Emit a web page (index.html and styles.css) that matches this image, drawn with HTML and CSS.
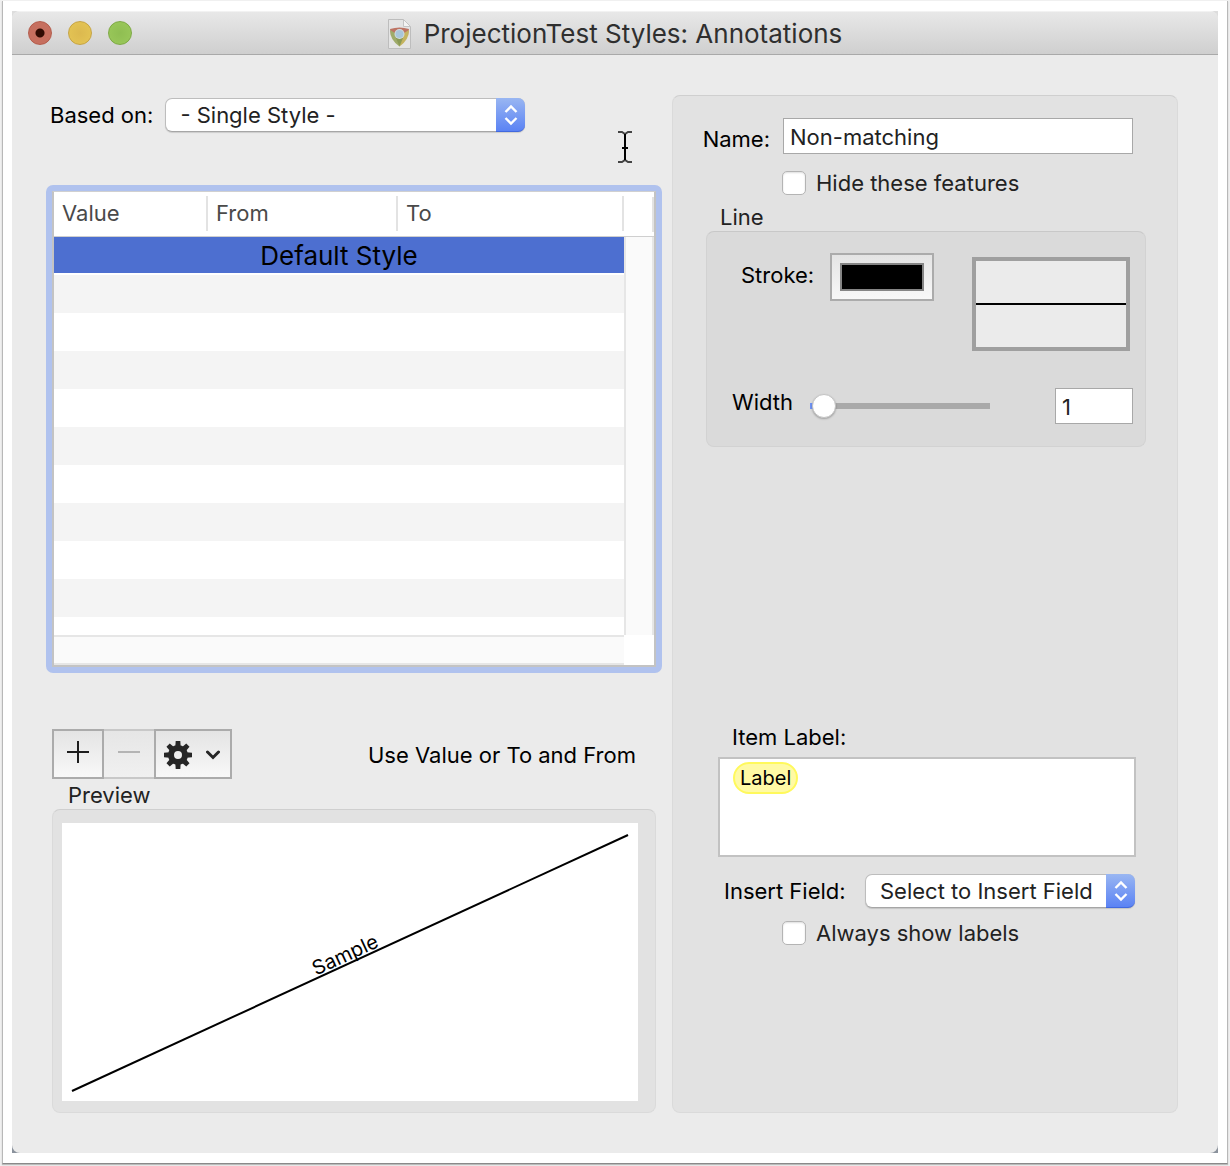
FILE: index.html
```html
<!DOCTYPE html>
<html lang="en">
<head>
<meta charset="utf-8">
<title>ProjectionTest Styles: Annotations</title>
<link rel="stylesheet" href="styles.css">
</head>
<body>
<div class="frame">
<div class="backdrop">
<main class="window">
  <header class="titlebar">
    <div class="lights">
      <button class="light light-close" aria-label="Close"></button>
      <button class="light light-min" aria-label="Minimize"></button>
      <button class="light light-zoom" aria-label="Zoom"></button>
    </div>
    <h1 class="title">
      <svg class="doc-icon" width="24" height="30" viewBox="0 0 24 30" aria-hidden="true">
        <path d="M.500 .500H15.500L22.500 7.500V29.500H.500Z" fill="#e4e4e4" stroke="#bdbdbd"/>
        <path d="M15.500 .500V7.500H22.500Z" fill="#f3f3f3" stroke="#c4c4c4"/>
        <path d="M2 10Q11.500 7 21 10L20 16H3Z" fill="#bd7464"/>
        <path d="M2 11Q2 21 11.500 27.500V18L7 14Z" fill="#9fab6a"/>
        <path d="M21 11Q21 21 11.500 27.500L9.500 20L16 14Z" fill="#c5b45f"/>
        <path d="M8 19L11.500 27.500L15 19Z" fill="#8a9a56"/>
        <circle cx="11.500" cy="15" r="5" fill="#d3dcde"/>
        <circle cx="11.500" cy="15" r="4" fill="#a9c6da"/>
      </svg>
      <span>ProjectionTest Styles: Annotations</span>
    </h1>
  </header>

  <div class="content">
    <section class="left">
      <div class="row based-row">
        <label for="based">Based on:</label>
        <div class="popup popup-based">
          <select id="based"><option>- Single Style -</option></select>
          <span class="cap"><svg width="14" height="22" viewBox="0 0 14 22"><path d="M1.500 8L7 2.500L12.500 8M1.500 14L7 19.500L12.500 14" fill="none" stroke="#fff" stroke-width="2.400"/></svg></span>
        </div>
      </div>

      <div class="focus-ring">
        <table class="styles-table">
          <colgroup><col class="c-value"><col class="c-from"><col class="c-to"><col class="c-scroll"></colgroup>
          <thead>
            <tr><th><span>Value</span></th><th><span>From</span></th><th><span>To</span></th><td class="head-end"><span></span></td></tr>
          </thead>
          <tbody>
            <tr class="selected"><td colspan="3">Default Style</td><td class="vscroll" rowspan="11"></td></tr>
            <tr class="gap"><td colspan="3"></td></tr>
            <tr class="alt"><td colspan="3"></td></tr>
            <tr><td colspan="3"></td></tr>
            <tr class="alt"><td colspan="3"></td></tr>
            <tr><td colspan="3"></td></tr>
            <tr class="alt"><td colspan="3"></td></tr>
            <tr><td colspan="3"></td></tr>
            <tr class="alt"><td colspan="3"></td></tr>
            <tr><td colspan="3"></td></tr>
            <tr class="alt"><td colspan="3"></td></tr>
          </tbody>
          <tfoot>
            <tr class="partial"><td colspan="3"></td><td class="vscroll"></td></tr>
            <tr class="hscroll"><td colspan="3"></td><td class="corner"></td></tr>
          </tfoot>
        </table>
      </div>

      <div class="tools">
        <div class="tool-group">
          <button class="tool" aria-label="Add"><svg width="22" height="22" viewBox="0 0 22 22"><path d="M11 0V22M0 11H22" stroke="#1e1e1e" stroke-width="2"/></svg></button>
          <button class="tool tool-off" aria-label="Remove" disabled><svg width="22" height="22" viewBox="0 0 22 22"><path d="M0 11H22" stroke="#b4b4b4" stroke-width="2"/></svg></button>
          <button class="tool tool-menu" aria-label="Actions">
            <svg width="28" height="28" viewBox="-14 -14 28 28"><g fill="#262626"><path d="M0-10A10 10 0 1 0 0 10A10 10 0 1 0 0-10ZM0-4A4 4 0 1 1 0 4A4 4 0 1 1 0-4Z" fill-rule="evenodd"/><path id="tooth" d="M-2.700-8.500L-2.300-14H2.300L2.700-8.500Z"/><use href="#tooth" transform="rotate(45)"/><use href="#tooth" transform="rotate(90)"/><use href="#tooth" transform="rotate(135)"/><use href="#tooth" transform="rotate(180)"/><use href="#tooth" transform="rotate(225)"/><use href="#tooth" transform="rotate(270)"/><use href="#tooth" transform="rotate(315)"/></g></svg>
            <svg width="14" height="10" viewBox="0 0 14 10"><path d="M1.500 2L7 7.500L12.500 2" fill="none" stroke="#262626" stroke-width="3" stroke-linecap="round"/></svg>
          </button>
        </div>
        <span class="hint">Use Value or To and From</span>
      </div>

      <section class="preview" aria-labelledby="preview-title">
        <h2 class="caption" id="preview-title">Preview</h2>
        <div class="box preview-box">
          <svg class="canvas" viewBox="0 0 576 278">
            <path d="M10 268L566 12" stroke="#000" stroke-width="2"/>
            <text class="sample" x="0" y="0" text-anchor="middle" transform="translate(286 138) rotate(-24.700)">Sample</text>
          </svg>
        </div>
      </section>
    </section>

    <section class="box panel">
      <div class="field-grid">
        <label class="name-label" for="name">Name:</label>
        <input class="text" id="name" type="text" value="Non-matching">
        <label class="check"><input type="checkbox">Hide these features</label>
      </div>

      <h2 class="caption">Line</h2>
      <div class="box line-box">
        <div class="line-top">
          <label for="stroke">Stroke:</label>
          <button class="swatch" id="stroke"><span></span></button>
          <div class="stroke-view"><span></span></div>
        </div>
        <div class="line-bottom">
          <label for="width">Width</label>
          <input class="slider" id="width" type="range" min="0" max="100" value="1">
          <input class="text" type="text" value="1" aria-label="Width value">
        </div>
      </div>

      <div class="label-area">
        <span class="label-caption" id="item-label">Item Label:</span>
        <div class="token-field" role="textbox" contenteditable="true" aria-labelledby="item-label"><span class="token">Label</span></div>
        <div class="row insert-row">
          <label for="insert">Insert Field:</label>
          <div class="popup">
            <select id="insert"><option>Select to Insert Field</option></select>
            <span class="cap"><svg width="14" height="22" viewBox="0 0 14 22"><path d="M1.500 8L7 2.500L12.500 8M1.500 14L7 19.500L12.500 14" fill="none" stroke="#fff" stroke-width="2.400"/></svg></span>
          </div>
        </div>
        <label class="check check-always"><input type="checkbox">Always show labels</label>
      </div>
    </section>

    <svg class="pointer" width="16" height="32" viewBox="0 0 16 32" aria-hidden="true">
      <path d="M1 1H5L8 3L11 1H15M1 31H5L8 29L11 31H15" fill="none" stroke="#444" stroke-width="2"/>
      <path d="M8 3V29M5 17H11" stroke="#000" stroke-width="2"/>
    </svg>
  </div>
</main>
</div>
</div>
</body>
</html>
```
FILE: styles.css
```css
* { box-sizing: border-box; }

body {
  margin: 0;
  padding: 1px 2px 2px;
  background: #f0f0f0;
  color: #000;
  font: 22px/28px Inter, "Liberation Sans", sans-serif;
}

button, input, select { margin: 0; font: inherit; color: #222; }

.frame {
  padding: 10px 9px;
  background: #fff;
  border: 1px solid #b8b8b8;
  border-top: 0;
  border-bottom-color: #8a8a8a;
  box-shadow: 0 1px 1px #bbb;
}

.backdrop { background: linear-gradient(#ddd, #8b929c); }

.window {
  background: #ebebeb;
  border-radius: 8px;
  overflow: hidden;
}

.titlebar {
  display: grid;
  grid-template-columns: 1fr auto 1fr;
  align-items: center;
  height: 44px;
  padding: 0 16px;
  background: linear-gradient(#e8e8e8, #cfcfcf);
  border-top: 1px solid #f2f2f2;
  border-bottom: 1px solid #a9a9a9;
}

.lights { display: flex; gap: 16px; }

.light {
  width: 24px;
  height: 24px;
  padding: 0;
  border: 1px solid;
  border-radius: 50%;
}
.light-close { background: radial-gradient(#300b03 0 4px, #c66f5f 5px); border-color: #b45c4c; }
.light-min { background: radial-gradient(#dcb94f, #e5c655); border-color: #c6a444; }
.light-zoom { background: radial-gradient(#8fbe52, #9bc95b); border-color: #7ea945; }

.title {
  display: flex;
  align-items: center;
  gap: 12px;
  margin: 0;
  padding-top: 1px;
  color: #2f2f2f;
  font-size: 26px;
  font-weight: 400;
  line-height: 32px;
}

.content {
  position: relative;
  display: grid;
  grid-template-columns: 616fr 506fr;
  gap: 10px;
  padding: 40px 40px 40px 34px;
}

.left { display: flex; flex-direction: column; min-width: 0; }

.row { display: flex; align-items: center; }

.based-row { gap: 12px; padding: 3px 4px; }

.popup { position: relative; display: flex; flex: 1; height: 34px; }
.popup-based { flex: 0 0 360px; }

.popup select {
  width: 100%;
  padding: 0 0 0 14px;
  appearance: none;
  background: #fff;
  border: 1px solid #bdbdbd;
  border-bottom-color: #a6a6a6;
  border-radius: 7px;
  box-shadow: 0 1px 1px #0002;
}

.cap {
  position: absolute;
  top: 0;
  right: 0;
  display: grid;
  place-items: center;
  width: 29px;
  height: 100%;
  background: linear-gradient(#99b6f2, #5b83f4);
  border-bottom: 1px solid #4169df;
  border-radius: 0 7px 7px 0;
  pointer-events: none;
}

.focus-ring {
  margin-top: 50px;
  border: 6px solid #b0c2ee;
  border-radius: 7px;
}

.styles-table {
  width: 100%;
  table-layout: fixed;
  border: 2px solid #c3c3c3;
  border-top: 1px solid #d0d0d0;
  border-spacing: 0;
  background: #fff;
}
.styles-table th, .styles-table td { padding: 0; }
.c-value { width: 154px; }
.c-from { width: 190px; }
.c-scroll { width: 30px; }

.styles-table thead th,
.head-end {
  height: 45px;
  padding: 4px 0 5px;
  border-bottom: 1px solid #cfcfcf;
  color: #4a4a4a;
  font-weight: 400;
  text-align: left;
}
.styles-table thead span {
  display: block;
  height: 35px;
  padding-left: 8px;
  border-right: 2px solid #e3e3e3;
  line-height: 35px;
}

.styles-table tbody tr { height: 38px; }
.styles-table tbody .selected { height: 36px; }
.styles-table tbody .gap { height: 2px; }
.styles-table .selected td:first-child {
  padding-top: 2px;
  background: #4d6fd0;
  font-size: 26px;
  line-height: 34px;
  text-align: center;
}
.alt td { background: #f4f4f4; }
.styles-table .vscroll {
  background: #fafafa;
  border: solid #e6e6e6;
  border-width: 0 2px;
}
.partial { height: 18px; }
.hscroll { height: 30px; }
.hscroll td:first-child {
  background: #fafafa;
  border: solid #e6e6e6;
  border-width: 2px 0;
}

.tools {
  display: flex;
  justify-content: space-between;
  align-items: center;
  margin-top: 56px;
  padding: 0 26px 0 6px;
}
.hint { padding-top: 2px; }

.tool-group { display: flex; height: 50px; }

.tool {
  display: flex;
  align-items: center;
  justify-content: center;
  width: 52px;
  padding: 0 0 4px;
  background: linear-gradient(#e4e4e4, #f8f8f8);
  border: 2px solid #ababab;
}
.tool-off {
  width: 50px;
  background: linear-gradient(#e6e6e6, #f0f0f0);
  border-color: #c8c8c8;
  border-width: 2px 0;
}
.tool-menu { gap: 14px; width: 78px; padding: 2px 2px 0 0; }

.caption {
  margin: 0;
  padding-left: 14px;
  color: #222;
  font-size: 22px;
  font-weight: 400;
  line-height: 28px;
}

.box {
  background: #e2e2e2;
  border: 1px solid #dadada;
  border-top-color: #cfcfcf;
  border-radius: 8px;
}

.preview { padding: 2px 6px 0; }
.preview .caption { padding-left: 16px; }
.preview-box { padding: 13px 17px 11px 9px; }
.canvas { display: block; width: 100%; background: #fff; }
.sample { font-size: 20px; }

.panel { padding: 22px 31px 22px 33px; }

.field-grid {
  display: grid;
  grid-template-columns: 64px 1fr;
  gap: 17px 12px;
  align-items: center;
  padding-right: 13px;
}
.field-grid .text { justify-self: end; width: calc(100% - 1px); }
.name-label { justify-self: end; padding-top: 5px; }

.text {
  width: 100%;
  min-width: 0;
  height: 36px;
  padding: 2px 6px 0;
  background: #fff;
  border: 1px solid #a8a8a8;
  border-radius: 0;
}

.check {
  display: flex;
  align-items: center;
  gap: 10px;
  grid-column: 2;
  height: 24px;
  color: #222;
}
.check input {
  width: 24px;
  height: 24px;
  appearance: none;
  background: #fff;
  border: 1px solid #b4b4b4;
  border-radius: 5px;
  box-shadow: inset 0 1px 2px #0002;
}

.panel > .caption { margin-top: 8px; }

.line-box {
  height: 216px;
  padding: 21px 12px 0 25px;
  background: #dadada;
  border-color: #d2d2d2;
  border-top-color: #c8c8c8;
}

.line-top { display: flex; align-items: flex-start; padding: 0 3px 0 9px; }
.line-top label { width: 89px; padding-top: 8px; }

.swatch {
  width: 104px;
  height: 48px;
  padding: 8px;
  background: linear-gradient(#e4e4e4, #f8f8f8);
  border: 2px solid #ababab;
}
.swatch span {
  display: block;
  height: 28px;
  background: #000;
  border: 2px solid #858585;
}

.stroke-view {
  display: grid;
  align-items: center;
  width: 158px;
  height: 94px;
  margin: 4px 0 0 auto;
  background: #ebebeb;
  border: 4px solid #9f9f9f;
}
.stroke-view span { height: 2px; background: #000; }

.line-bottom {
  display: grid;
  grid-template-columns: 78px 180px 1fr 78px;
  align-items: center;
  margin-top: 37px;
}
.line-bottom .text { grid-column: 4; }
.line-bottom label { padding-bottom: 8px; }

.slider {
  width: 100%;
  height: 26px;
  appearance: none;
  background: linear-gradient(90deg, #6f93f4 8px, #a9a9a9 8px) center / 100% 6px no-repeat;
  border-radius: 3px;
}
.slider::-webkit-slider-thumb {
  appearance: none;
  width: 24px;
  height: 24px;
  margin-top: 1px;
  background: #fff;
  border: 1px solid #c4c4c4;
  border-radius: 50%;
  box-shadow: 0 1px 2px #0004;
}
.slider::-webkit-slider-runnable-track { height: 26px; }

.label-area { padding: 276px 10px 0 12px; }
.label-caption { display: block; padding-left: 14px; }

.token-field {
  height: 100px;
  margin-top: 6px;
  padding: 3px 13px;
  background: #fff;
  border: 2px solid #c2c2c2;
}
.token {
  display: inline-block;
  padding: 0 5px;
  background: #fffaa5;
  border: 2px solid #fff95c;
  border-radius: 16px;
  font-size: 20px;
}

.insert-row { margin-top: 17px; padding: 0 1px 0 6px; }
.insert-row label { flex: 0 0 141px; }
.check-always { margin: 13px 0 0 64px; }

.pointer { position: absolute; top: 76px; left: 605px; }
```
